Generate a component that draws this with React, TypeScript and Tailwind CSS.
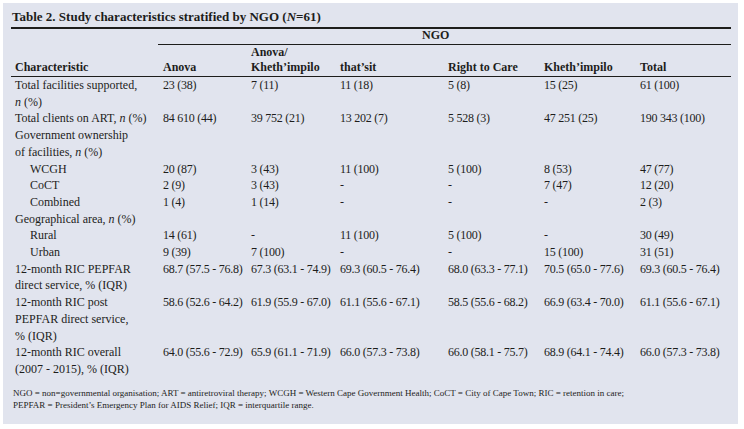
import React from "react";

/* ── Data ─────────────────────────────────────────────────── */

type Row = {
  label: React.ReactNode;
  indent?: boolean;
  values?: string[];
};

const N = () => <i>n</i>;

const ROWS: Row[] = [
  {
    label: (
      <>
        Total facilities supported,
        <br />
        <N /> (%)
      </>
    ),
    values: ["23 (38)", "7 (11)", "11 (18)", "5 (8)", "15 (25)", "61 (100)"],
  },
  {
    label: (
      <>
        Total clients on ART, <N /> (%)
      </>
    ),
    values: ["84 610 (44)", "39 752 (21)", "13 202 (7)", "5 528 (3)", "47 251 (25)", "190 343 (100)"],
  },
  {
    label: (
      <>
        Government ownership
        <br />
        of facilities, <N /> (%)
      </>
    ),
  },
  { label: "WCGH", indent: true, values: ["20 (87)", "3 (43)", "11 (100)", "5 (100)", "8 (53)", "47 (77)"] },
  { label: "CoCT", indent: true, values: ["2 (9)", "3 (43)", "-", "-", "7 (47)", "12 (20)"] },
  { label: "Combined", indent: true, values: ["1 (4)", "1 (14)", "-", "-", "-", "2 (3)"] },
  {
    label: (
      <>
        Geographical area, <N /> (%)
      </>
    ),
  },
  { label: "Rural", indent: true, values: ["14 (61)", "-", "11 (100)", "5 (100)", "-", "30 (49)"] },
  { label: "Urban", indent: true, values: ["9 (39)", "7 (100)", "-", "-", "15 (100)", "31 (51)"] },
  {
    label: (
      <>
        12-month RIC PEPFAR
        <br />
        direct service, % (IQR)
      </>
    ),
    values: [
      "68.7 (57.5 - 76.8)",
      "67.3 (63.1 - 74.9)",
      "69.3 (60.5 - 76.4)",
      "68.0 (63.3 - 77.1)",
      "70.5 (65.0 - 77.6)",
      "69.3 (60.5 - 76.4)",
    ],
  },
  {
    label: (
      <>
        12-month RIC post
        <br />
        PEPFAR direct service,
        <br />% (IQR)
      </>
    ),
    values: [
      "58.6 (52.6 - 64.2)",
      "61.9 (55.9 - 67.0)",
      "61.1 (55.6 - 67.1)",
      "58.5 (55.6 - 68.2)",
      "66.9 (63.4 - 70.0)",
      "61.1 (55.6 - 67.1)",
    ],
  },
  {
    label: (
      <>
        12-month RIC overall
        <br />
        (2007 - 2015), % (IQR)
      </>
    ),
    values: [
      "64.0 (55.6 - 72.9)",
      "65.9 (61.1 - 71.9)",
      "66.0 (57.3 - 73.8)",
      "66.0 (58.1 - 75.7)",
      "68.9 (64.1 - 74.4)",
      "66.0 (57.3 - 73.8)",
    ],
  },
];

const COL_WIDTHS = [152, 88, 89, 108, 96, 96, 91];

/* ── Component ─────────────────────────────────────────────── */

export default function App() {
  return (
    <div className="w-[744px] h-[429px] bg-white pt-[3px] pl-[3px] font-['Liberation_Serif',serif] text-[#1d1d1b]">
      <div className="w-[735px] h-[421px] bg-[#e1e4ee] pl-[8px] pr-[7px] pt-[5px]">
        {/* Title */}
        <div className="text-[13px] leading-[17px] font-bold pl-[1px] pb-[2px] border-b-2 border-[#1d1d1b]">
          Table 2. Study characteristics stratified by NGO (<i>N</i>=61)
        </div>

        <table className="w-[720px] table-fixed border-collapse text-[12px]">
          <colgroup>
            {COL_WIDTHS.map((w, i) => (
              <col key={i} style={{ width: w }} />
            ))}
          </colgroup>
          <thead>
            <tr>
              <th className="p-0" />
              <th colSpan={6} className="p-0 font-bold text-left">
                <div className="-ml-[5px] leading-[13px] pb-[2px] pl-[264px] border-b border-[#1d1d1b]">NGO</div>
              </th>
            </tr>
            <tr className="align-bottom font-bold text-left">
              <th className="p-0 pl-[4px] pb-[1px] leading-[15px] border-b border-[#1d1d1b] text-left">Characteristic</th>
              <th className="p-0 pb-[1px] leading-[15px] border-b border-[#1d1d1b] text-left">Anova</th>
              <th className="p-0 pb-[1px] leading-[15px] border-b border-[#1d1d1b] text-left">
                Anova/
                <br />
                Kheth’impilo
              </th>
              <th className="p-0 pb-[1px] leading-[15px] border-b border-[#1d1d1b] text-left">that’sit</th>
              <th className="p-0 pb-[1px] leading-[15px] border-b border-[#1d1d1b] text-left">Right to Care</th>
              <th className="p-0 pb-[1px] leading-[15px] border-b border-[#1d1d1b] text-left">Kheth’impilo</th>
              <th className="p-0 pb-[1px] leading-[15px] border-b border-[#1d1d1b] text-left">Total</th>
            </tr>
          </thead>
          <tbody className="leading-[16.7px]">
            {ROWS.map((row, r) => (
              <tr key={r} className="align-top">
                <td className={row.indent ? "p-0 pl-[19px]" : "p-0 pl-[4px]"}>{row.label}</td>
                {(row.values ?? ["", "", "", "", "", ""]).map((v, c) => (
                  <td key={c} className="p-0 whitespace-nowrap tracking-[-0.25px]">
                    {v}
                  </td>
                ))}
              </tr>
            ))}
          </tbody>
        </table>

        {/* Footnote */}
        <div className="mt-[9px] pl-[2px] text-[9px] leading-[12.5px]">
          NGO = non=governmental organisation; ART = antiretroviral therapy; WCGH = Western Cape Government Health; CoCT =
          City of Cape Town; RIC = retention in care;
          <br />
          PEPFAR = President’s Emergency Plan for AIDS Relief; IQR = interquartile range.
        </div>
      </div>
    </div>
  );
}
